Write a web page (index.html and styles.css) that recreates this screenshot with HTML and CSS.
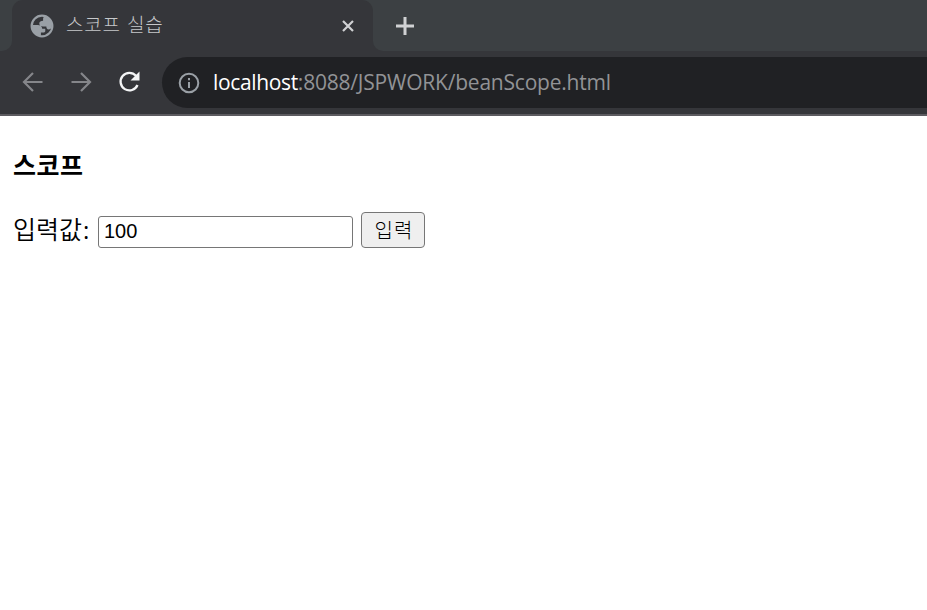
FILE: index.html
```html
<!DOCTYPE html>
<html lang="ko">
<head>
<meta charset="utf-8">
<title>스코프 실습</title>
<link rel="stylesheet" href="styles.css">
</head>
<body>
<header class="browser">
  <div class="tabs">
    <div class="edge left"></div>
    <div class="tab">
      <svg class="globe" viewBox="0 0 22 22"><circle cx="11" cy="11" r="9.5" fill="none" stroke="#9aa0a6" stroke-width="2"/><path fill="#9aa0a6" d="M2 10H7C9.500 10 11.200 11.200 11.200 13.500H14V15.500C14 16.500 13 17 12 17H10V20C5 20 1.500 16 2 10ZM13 1.800C17 2.500 20.500 6.500 20 12C19.500 13.500 18.500 14.200 17 14.200C15.500 14.200 15 13 15 11.500H12C10 11.500 8.500 10.500 8.500 8.800C8.500 7 10 6.200 12 6.200V4.500C12 3.500 12.200 3 13 2.500Z"/></svg>
      <span class="title">스코프 실습</span>
      <svg class="close" viewBox="0 0 14 14"><path d="M2 2L12 12M12 2L2 12"/></svg>
    </div>
    <div class="edge right">
      <svg class="plus" viewBox="0 0 18 18"><path d="M9 0V18M0 9H18"/></svg>
    </div>
  </div>
  <div class="toolbar">
    <svg class="nav" viewBox="0 0 24 24"><path d="M21.500 12H3M12 3L3 12L12 21"/></svg>
    <svg class="nav" viewBox="0 0 24 24"><path d="M2.500 12H21M12 3L21 12L12 21"/></svg>
    <svg class="nav reload" viewBox="0 0 24 24"><path d="M19 5.800A8.800 8.800 0 1 0 20.500 15"/><path class="tip" d="M22.500 1.500V10.500H13.500Z"/></svg>
    <div class="address">
      <svg class="info" viewBox="0 0 22 22"><circle cx="11" cy="11" r="9.300"/><path d="M11 10V16M11 6V8.200"/></svg>
      <span class="url"><span class="host">localhost</span><span class="path">:8088/JSPWORK/beanScope.html</span></span>
    </div>
  </div>
</header>
<main>
  <h3>스코프</h3>
  <form class="row">
    <label for="value">입력값<span class="colon">:</span></label>
    <input id="value" type="text" value="100">
    <button type="button">입력</button>
  </form>
</main>
</body>
</html>
```
FILE: styles.css
```css
* { box-sizing: border-box; }
body { margin: 0; background: #fff; color: #000; font-family: "Noto Sans CJK KR", sans-serif; }
.browser { height: 116px; background: #35363a; border-bottom: 2px solid #5c5b60; }
.tabs { display: flex; height: 51px; background: #35363a; }
.edge { background: #3c4043; }
.left { width: 12px; border-bottom-right-radius: 10px; }
.right { flex: 1; border-bottom-left-radius: 10px; padding: 17px 0 0 23px; }
.tab { width: 361px; display: flex; align-items: center; padding: 0 18px; background: linear-gradient(#3c4043 50%, #35363a 50%); position: relative; }
.tab::before { content: ""; position: absolute; inset: 0; background: #35363a; border-radius: 11px 11px 0 0; }
.tab > * { position: relative; }
.globe { width: 24px; height: 24px; margin-top: 1px; }
.title { margin-left: 12px; flex: 1; font-size: 19px; line-height: 24px; letter-spacing: .8px; color: #c6c8ca; font-weight: 300; white-space: nowrap; margin-top: -4px; }
.close { width: 14px; height: 14px; fill: none; stroke: #d0d1d3; stroke-width: 2.2; }
.plus { display: block; width: 18px; height: 18px; stroke: #d0d1d3; stroke-width: 3; }
.toolbar { height: 63px; display: flex; align-items: center; padding-left: 21px; }
.nav { width: 24px; height: 24px; margin: 0 24px 1px 0; fill: none; stroke: #85868a; stroke-width: 2.2; }
.reload { stroke: #f4f5f6; stroke-width: 2.3; margin-right: 21px; }
.reload .tip { fill: #f4f5f6; stroke: none; }
.address { flex: 1; height: 51px; margin-bottom: 1px; background: #202124; border-radius: 26px 0 0 26px; display: flex; align-items: center; padding-left: 16px; }
.info { width: 22px; height: 22px; margin-top: 2px; fill: none; stroke: #9aa0a6; stroke-width: 2; }
.url { display: flex; margin-left: 13px; font: 21px/30px "Open Sans", sans-serif; white-space: nowrap; }
.host { color: #fff; letter-spacing: -.35px; }
.path { color: #929396; letter-spacing: -.21px; }
main { padding: 29px 13px; }
h3 { margin: 0; font-size: 25px; line-height: 38px; letter-spacing: .5px; font-weight: 700; }
.row { display: flex; margin-top: 29px; height: 36px; }
label { width: 85px; font-size: 25px; line-height: 32px; font-weight: 350; white-space: nowrap; }
.colon { margin-left: 1px; font: 24px "Open Sans", sans-serif; }
input { width: 255px; height: 32px; margin: 4px 8px 0 0; padding: 0 5px 2px; border: 1px solid #767676; border-radius: 3px; font: 20px "Liberation Sans", sans-serif; color: #000; background: #fff; }
button { width: 64px; height: 36px; padding: 0 0 0 2px; border: 1px solid #767676; border-radius: 4px; background: #efefef; color: #000; font: 300 20px/30px "Noto Sans CJK KR", sans-serif; letter-spacing: 1px; }
```
